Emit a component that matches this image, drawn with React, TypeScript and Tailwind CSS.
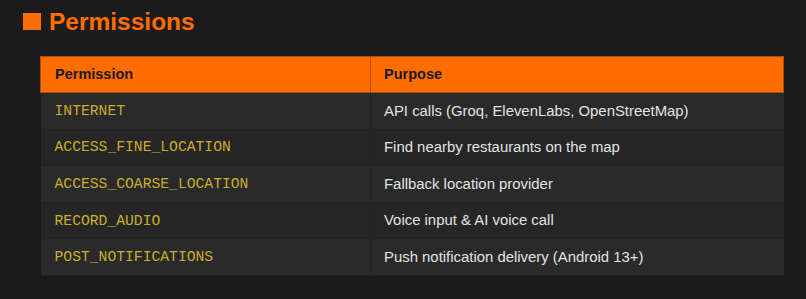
import React from "react";

const rows: [string, string][] = [
  ["INTERNET", "API calls (Groq, ElevenLabs, OpenStreetMap)"],
  ["ACCESS_FINE_LOCATION", "Find nearby restaurants on the map"],
  ["ACCESS_COARSE_LOCATION", "Fallback location provider"],
  ["RECORD_AUDIO", "Voice input & AI voice call"],
  ["POST_NOTIFICATIONS", "Push notification delivery (Android 13+)"],
];

export default function App() {
  return (
    <div className="w-[806px] h-[299px] bg-[#1b1b1b] overflow-hidden font-[family-name:'Liberation_Sans',Arial,sans-serif]">
      <div className="flex items-center gap-[8px] pl-[23px] pt-[7px] h-[36px]">
        <span className="block w-[18px] h-[17px] bg-[#ff6d00]" />
        <h1 className="text-[24.5px] leading-[28px] font-bold text-[#ff6d00]">Permissions</h1>
      </div>
      <div className="pl-[40px] pt-[20px]">
        <table className="w-[744px] border-collapse table-fixed">
          <thead>
            <tr className="bg-[#ff6d00] h-[36px]">
              <th className="w-[330px] border border-[#b04c0a] text-left pl-[14px] text-[14.5px] font-bold text-[#1a1a1a]">Permission</th>
              <th className="border border-[#b04c0a] text-left pl-[13px] text-[14.5px] font-bold text-[#1a1a1a]">Purpose</th>
            </tr>
          </thead>
          <tbody>
            {rows.map(([p, d], i) => (
              <tr key={p} className={i % 2 === 0 ? "h-[36.6px] bg-[#2a2a2a]" : "h-[36.6px] bg-[#262626]"}>
                <td className="border-r border-b border-[#222222] pl-[14px] font-[family-name:'Liberation_Mono','Courier_New',monospace] text-[14.7px] text-[#c9ad2c]">{p}</td>
                <td className="border-b border-[#222222] pl-[13px] text-[14.9px] text-[#e2e2e2]">{d}</td>
              </tr>
            ))}
          </tbody>
        </table>
      </div>
    </div>
  );
}
